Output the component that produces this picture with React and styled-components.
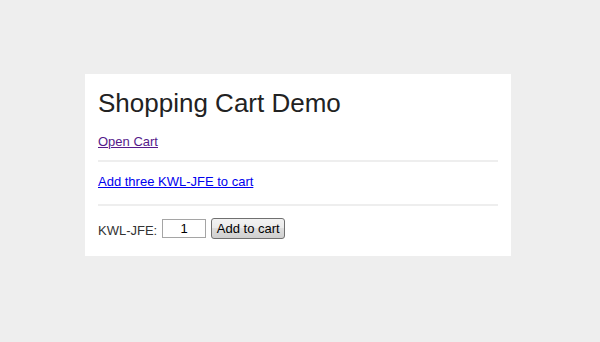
import React from "react";
import styled, { createGlobalStyle } from "styled-components";

const GlobalStyle = createGlobalStyle`
  body {
    margin: 0;
    background: #eeeeee;
    font-family: "Liberation Sans", Arial, sans-serif;
  }
`;

const Page = styled.div`
  width: 600px;
  height: 342px;
  padding: 74px 0 0 85px;
  box-sizing: border-box;
`;

const Panel = styled.div`
  width: 400px;
  background: #ffffff;
  padding: 15px 13px 18px;
`;

const Title = styled.h1`
  margin: 0 0 5px;
  font-size: 26px;
  line-height: 28px;
  font-weight: normal;
  color: #222222;
`;

const Section = styled.div`
  padding: ${(props) => props.$pad || "12px 0"};
  border-bottom: ${(props) => (props.$last ? "none" : "2px solid #eeeeee")};
  font-size: 13px;
  line-height: 15px;
  color: #333333;
`;

const Link = styled.a`
  color: ${(props) => (props.$visited ? "#551a8b" : "#0000ee")};
  text-decoration: underline;
  cursor: pointer;
`;

const Row = styled.div`
  display: flex;
  align-items: center;
  height: 20px;
`;

const Label = styled.label`
  align-self: flex-end;
  margin-right: 5px;
`;

const Qty = styled.input`
  width: 44px;
  height: 19px;
  box-sizing: border-box;
  border: 1px solid #a5a5a5;
  padding: 0 2px;
  font: 13px "Liberation Sans", Arial, sans-serif;
  text-align: center;
  color: #000;
  margin-right: 5px;
  outline: none;
`;

const Button = styled.button`
  height: 21px;
  width: 74px;
  padding: 0;
  box-sizing: border-box;
  white-space: nowrap;
  border: 1px solid #707070;
  border-radius: 3px;
  background: linear-gradient(#f2f2f2 0%, #ebebeb 45%, #dddddd 50%, #cfcfcf 100%);
  font: 13px/19px "Liberation Sans", Arial, sans-serif;
  color: #000;
  cursor: pointer;
`;

const App = () => {
  return (
    <Page>
      <GlobalStyle />
      <Panel>
        <Title>Shopping Cart Demo</Title>
        <Section $pad="12px 0 11px">
          <Link $visited>Open Cart</Link>
        </Section>
        <Section $pad="12px 0 15px">
          <Link>Add three KWL-JFE to cart</Link>
        </Section>
        <Section $pad="12px 0 0" $last>
          <Row>
            <Label>KWL-JFE:</Label>
            <Qty defaultValue="1" />
            <Button>Add to cart</Button>
          </Row>
        </Section>
      </Panel>
    </Page>
  );
};

export default App;
